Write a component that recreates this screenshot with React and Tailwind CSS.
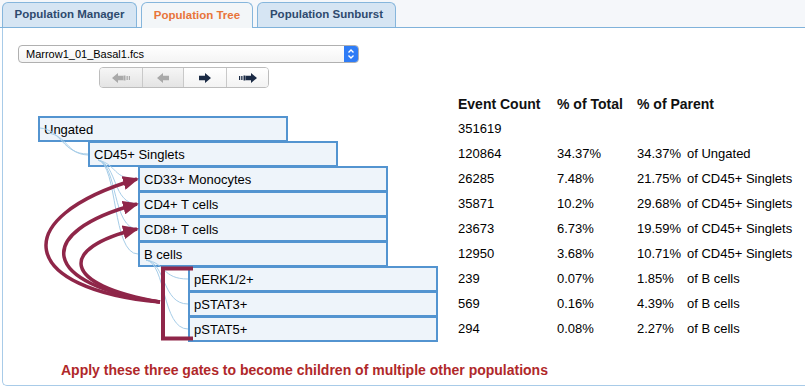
import React from 'react';

const rows = [
  { name: 'Ungated', depth: 0, count: '351619', total: '', pct: '', of: '' },
  { name: 'CD45+ Singlets', depth: 1, count: '120864', total: '34.37%', pct: '34.37%', of: 'of Ungated' },
  { name: 'CD33+ Monocytes', depth: 2, count: '26285', total: '7.48%', pct: '21.75%', of: 'of CD45+ Singlets' },
  { name: 'CD4+ T cells', depth: 2, count: '35871', total: '10.2%', pct: '29.68%', of: 'of CD45+ Singlets' },
  { name: 'CD8+ T cells', depth: 2, count: '23673', total: '6.73%', pct: '19.59%', of: 'of CD45+ Singlets' },
  { name: 'B cells', depth: 2, count: '12950', total: '3.68%', pct: '10.71%', of: 'of CD45+ Singlets' },
  { name: 'pERK1/2+', depth: 3, count: '239', total: '0.07%', pct: '1.85%', of: 'of B cells' },
  { name: 'pSTAT3+', depth: 3, count: '569', total: '0.16%', pct: '4.39%', of: 'of B cells' },
  { name: 'pSTAT5+', depth: 3, count: '294', total: '0.08%', pct: '2.27%', of: 'of B cells' },
];

const indent = ['ml-[35px]', 'ml-[85px]', 'ml-[135px]', 'ml-[185px]'];

const Arrow = ({ color, flip, bars }) => (
  <svg width="20" height="10" viewBox="0 0 20 10" className={flip ? 'scale-x-[-1]' : ''}>
    {bars && (
      <g fill={color}>
        <rect x="1" y="3" width="1.2" height="4" />
        <rect x="3.2" y="3" width="1.3" height="4" />
        <rect x="5.5" y="2.5" width="1.8" height="5" />
      </g>
    )}
    <polygon
      fill={color}
      points={bars ? '7.5,2.7 13,2.7 13,0 19,5 13,10 13,7.3 7.5,7.3' : '4,2.7 10,2.7 10,0 16,5 10,10 10,7.3 4,7.3'}
    />
  </svg>
);

const Tab = ({ label, active }) =>
  active ? (
    <div className="h-[26px] w-[112px] -mb-px flex items-center justify-center rounded-t-[6px] border border-b-0 border-[#86b6dc] bg-[#f3f6f8] text-[11.5px] font-bold text-[#e8743a]">
      {label}
    </div>
  ) : (
    <div className="h-[25px] flex items-center justify-center rounded-t-[6px] border border-b-0 border-[#86b6dc] bg-[#d6e5f3] text-[11.5px] font-bold text-[#2e4a6e] px-[11px]">
      {label}
    </div>
  );

const App = () => {
  const blue = '#a6cde8';
  const red = '#8f2649';

  return (
    <div className="relative w-[805px] h-[387px] overflow-hidden bg-white font-['Liberation_Sans',Arial,sans-serif] text-black">
      {/* tab strip */}
      <div className="h-[28px] bg-[#f5f7fa] border-b border-[#80b2da] flex items-end gap-[4px] pl-[2px]">
        <div className="w-[135px]"><Tab label="Population Manager" /></div>
        <Tab label="Population Tree" active />
        <div className="w-[139px]"><Tab label="Population Sunburst" /></div>
      </div>

      {/* panel */}
      <div className="ml-[2px] w-[830px] h-[358px] border-l border-b border-[#a8cbe8] rounded-bl-[5px] pt-[17px]">
        {/* file select */}
        <div className="ml-[15px] w-[341px] h-[18px] flex items-center rounded-[4px] border border-[#b0b0b0] bg-gradient-to-b from-white to-[#f4f4f4] overflow-hidden">
          <span className="pl-[7px] flex-1 text-[11px] leading-none">Marrow1_01_Basal1.fcs</span>
          <div className="w-[14px] h-full bg-[#2f7cf6] flex items-center justify-center">
            <svg width="8" height="12" viewBox="0 0 8 12" fill="none" stroke="white" strokeWidth="1.4">
              <path d="M1.5 4.5 L4 2 L6.5 4.5" />
              <path d="M1.5 7.5 L4 10 L6.5 7.5" />
            </svg>
          </div>
        </div>

        {/* navigation buttons */}
        <div className="ml-[96px] mt-[4px] w-[170px] h-[21px] flex rounded-[4px] border border-[#bdbdbd] overflow-hidden">
          <div className="w-[43px] flex items-center justify-center bg-gradient-to-b from-[#f6f6f6] to-[#e4e4e4] border-r border-[#c9c9c9]">
            <Arrow color="#a9a9a9" flip bars />
          </div>
          <div className="w-[41px] flex items-center justify-center bg-gradient-to-b from-[#f6f6f6] to-[#e4e4e4] border-r border-[#c9c9c9]">
            <Arrow color="#a9a9a9" flip />
          </div>
          <div className="w-[43px] flex items-center justify-center bg-gradient-to-b from-white to-[#f3f3f3] border-r border-[#c9c9c9]">
            <Arrow color="#1b2b45" />
          </div>
          <div className="flex-1 flex items-center justify-center bg-gradient-to-b from-white to-[#f3f3f3]">
            <Arrow color="#1b2b45" bars />
          </div>
        </div>

        {/* header */}
        <div className="mt-[4px] h-[24px] flex items-center text-[14px] font-bold text-[#111]">
          <div className="w-[455px]" />
          <div className="w-[99px]">Event Count</div>
          <div className="w-[80px]">% of Total</div>
          <div>% of Parent</div>
        </div>

        {/* rows */}
        {rows.map((r) => (
          <div key={r.name} className="h-[25px] flex items-start text-[13px]">
            <div className="w-[455px] shrink-0">
              <div className={`${indent[r.depth]} w-[250px] h-[26px] border-2 border-[#5394d0] bg-[#eef4fa] pl-[4px] leading-[23px]`}>
                {r.name}
              </div>
            </div>
            <div className="w-[99px] leading-[26px]">{r.count}</div>
            <div className="w-[80px] leading-[26px]">{r.total}</div>
            <div className="leading-[26px] flex">
              <span className="w-[50px]">{r.pct}</span>
              <span>{r.of}</span>
            </div>
          </div>
        ))}

        <div className="ml-[58px] mt-[21px] text-[14px] font-bold text-[#b0282a] leading-[16px]">
          Apply these three gates to become children of multiple other populations
        </div>
      </div>

      {/* tree connectors and annotation */}
      <svg className="absolute inset-0 pointer-events-none" width="805" height="387">
        <defs>
          <marker id="ah" markerUnits="userSpaceOnUse" markerWidth="16" markerHeight="14" viewBox="0 0 16 14" refX="14" refY="7" orient="auto">
            <path d="M0,0 L16,7 L0,14 z" fill={red} />
          </marker>
        </defs>
        <g fill="none" stroke={blue} strokeWidth="1">
          <path d="M40 128 C62 130, 62 154, 88 154" />
          <path d="M48 133 C68 136, 66 154, 88 155" />
          {[179, 204, 229, 254].map((y) => (
            <path key={y} d={`M98 160 C118 165, 112 ${y}, 138 ${y}`} />
          ))}
          {[279, 304, 329].map((y) => (
            <path key={y} d={`M146 260 C166 263, 162 ${y}, 188 ${y}`} />
          ))}
        </g>
        <g fill="none" stroke={red} strokeWidth="3.5">
          <path d="M160 302 C20 290, 5 218, 137 179" markerEnd="url(#ah)" />
          <path d="M160 302 C40 285, 32 232, 137 204" markerEnd="url(#ah)" />
          <path d="M160 302 C60 285, 58 248, 137 229" markerEnd="url(#ah)" />
          <path d="M193 268.5 L163 268.5 L163 338.5 L193 338.5" strokeWidth="4" />
        </g>
      </svg>
    </div>
  );
};

export default App;
